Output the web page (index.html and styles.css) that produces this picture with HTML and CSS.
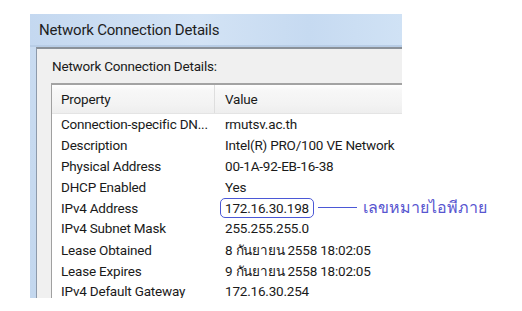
FILE: index.html
```html
<!DOCTYPE html>
<html>
<head>
    <title>Network Connection Details</title>
    <link rel="stylesheet" href="styles.css">
</head>
<body>
    <div class="page">
        <div class="window">
            <div class="titlebar">Network Connection Details</div>
            <div class="panel">
                <div class="caption">Network Connection Details:</div>
                <div class="listbox">
                    <div class="list-head">
                        <div class="col-prop">Property</div>
                        <div class="col-val">Value</div>
                    </div>
                    <div class="rows">
                        <div class="row"><div class="col-prop">Connection-specific DN...</div><div class="col-val">rmutsv.ac.th</div></div>
                        <div class="row"><div class="col-prop">Description</div><div class="col-val">Intel(R) PRO/100 VE Network</div></div>
                        <div class="row"><div class="col-prop">Physical Address</div><div class="col-val">00-1A-92-EB-16-38</div></div>
                        <div class="row"><div class="col-prop">DHCP Enabled</div><div class="col-val">Yes</div></div>
                        <div class="row"><div class="col-prop">IPv4 Address</div><div class="col-val"><span class="marked">172.16.30.198</span></div></div>
                        <div class="row"><div class="col-prop">IPv4 Subnet Mask</div><div class="col-val">255.255.255.0</div></div>
                        <div class="row"><div class="col-prop">Lease Obtained</div><div class="col-val">8 กันยายน 2558 18:02:05</div></div>
                        <div class="row"><div class="col-prop">Lease Expires</div><div class="col-val">9 กันยายน 2558 18:02:05</div></div>
                        <div class="row"><div class="col-prop">IPv4 Default Gateway</div><div class="col-val">172.16.30.254</div></div>
                    </div>
                </div>
            </div>
        </div>

        <!-- note drawn over the screenshot -->
        <div class="note">
            <span class="note-line"></span>
            <span class="note-text">เลขหมายไอพีภาย</span>
        </div>
    </div>
</body>
</html>
```

FILE: styles.css
```css
body {
    margin: 0;
    background-color: white;
    font-family: Roboto, "Liberation Sans", Tahoma, sans-serif;
    color: #1a1a1a;
}

.page {
    position: relative;
    width: 522px;
    height: 311px;
    overflow: hidden;
}

.window {
    margin: 14px 0 0 30px;
    width: 372px;
    height: 284px;
    overflow: hidden;
    display: flex;
    flex-direction: column;
    background: linear-gradient(180deg, #cadcf1 0%, #c3d7ee 100%);
}

.titlebar {
    height: 31px;
    flex-shrink: 0;
    padding-left: 9px;
    display: flex;
    align-items: center;
    font-size: 15px;
    letter-spacing: -0.2px;
    color: #1e1e1e;
    background: linear-gradient(90deg, #c4d8f0 0%, #d3e3f5 45%, #c6daf1 75%, #d0e2f5 100%);
    border-bottom: 2px solid #b8cde6;
}

.panel {
    flex: 1;
    margin-left: 6px;
    border-left: 1px solid #8d9aab;
    border-top: 2px solid #8a9199;
    background-color: #f0f0f0;
    padding-left: 14px;
    display: flex;
    flex-direction: column;
}

.caption {
    height: 34px;
    flex-shrink: 0;
    padding-left: 1px;
    display: flex;
    align-items: center;
    font-size: 13.5px;
    letter-spacing: -0.2px;
}

.listbox {
    flex: 1;
    background-color: white;
    border-top: 2px solid #a3a3a3;
    border-left: 1px solid #a0a0a0;
    font-size: 13.5px;
    letter-spacing: -0.2px;
}

.list-head {
    display: grid;
    grid-template-columns: 163px 1fr;
    height: 28px;
    background: linear-gradient(180deg, #ffffff 0%, #f7f7f7 20%, #f3f3f3 70%, #eeeeee 100%);
    border-bottom: 1px solid #e4e4e4;
}

.list-head .col-prop,
.list-head .col-val {
    display: flex;
    align-items: center;
}

.list-head .col-prop {
    border-right: 1px solid #dedede;
}

.row {
    display: grid;
    grid-template-columns: 163px 1fr;
    height: 20.8px;
    align-items: center;
    white-space: nowrap;
}

.col-prop {
    padding-left: 9px;
}

.col-val {
    padding-left: 10px;
}

.marked {
    display: inline-block;
    margin-left: -5px;
    padding: 0 4px;
    border: 1px solid #4b58d6;
    border-radius: 5px;
    line-height: 18px;
}

.note {
    position: absolute;
    left: 318px;
    top: 197px;
    display: flex;
    align-items: center;
    height: 20px;
}

.note-line {
    width: 39px;
    height: 1px;
    background-color: #4b58d6;
}

.note-text {
    margin-left: 6px;
    font-size: 16px;
    color: #5856d0;
}
```
